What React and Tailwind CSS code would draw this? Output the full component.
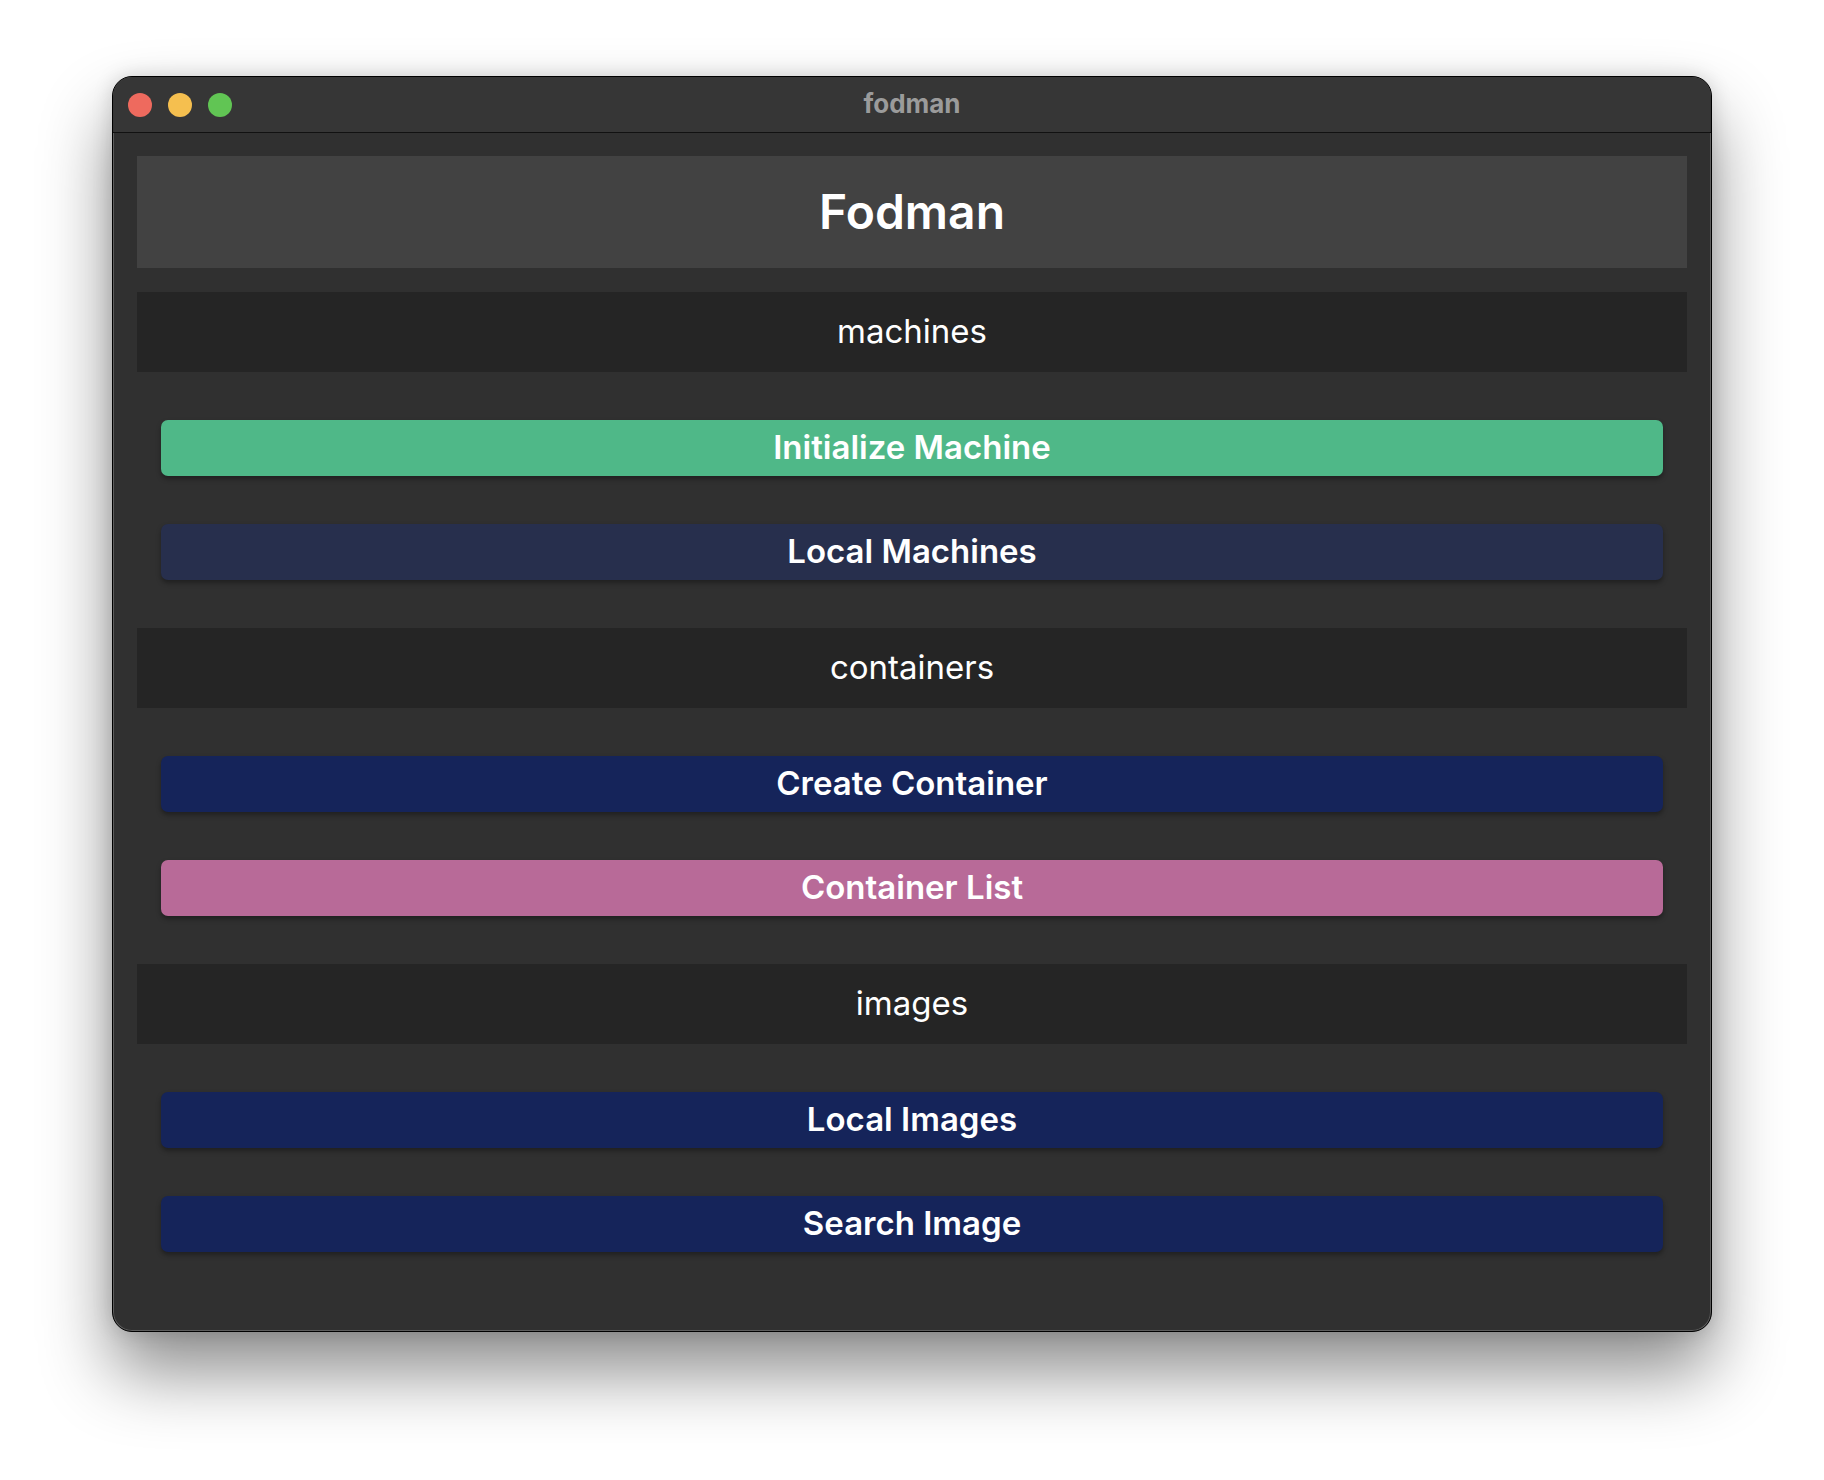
import React from "react";

const font = { fontFamily: "Inter, 'Noto Sans', 'Liberation Sans', sans-serif" };

function Btn({ label, color }) {
  return (
    <div
      className={`mx-6 h-[56px] rounded-[7px] flex items-center justify-center text-white text-[33px] font-semibold shadow-[0_3px_5px_rgba(0,0,0,0.35)] ${color}`}
    >
      {label}
    </div>
  );
}

function Section({ label }) {
  return (
    <div className="h-[80px] bg-[#252525] flex items-center justify-center text-white text-[33px] font-normal">
      {label}
    </div>
  );
}

export default function App() {
  return (
    <div className="min-h-[1480px] bg-white pt-[76px] px-[112px]" style={font}>
      <div className="w-[1600px] h-[1256px] rounded-[20px] border border-black bg-[#303030] overflow-hidden shadow-[0_40px_70px_rgba(0,0,0,0.45),0_0_20px_rgba(0,0,0,0.15),inset_0_0_0_1px_rgba(255,255,255,0.22)] flex flex-col">
        <div className="relative h-[56px] shrink-0 bg-[#363636] border-b border-[#111] flex items-center pl-[15px] gap-4">
          <div className="w-6 h-6 rounded-full bg-[#ee6a5e]" />
          <div className="w-6 h-6 rounded-full bg-[#f5bf4f]" />
          <div className="w-6 h-6 rounded-full bg-[#61c554]" />
          <div className="absolute inset-0 flex items-center justify-center pb-[3px] text-[26px] font-bold text-[#9b9b9b] pointer-events-none">
            fodman
          </div>
        </div>
        <div className="px-6 pt-[23px] flex flex-col">
          <div className="h-[112px] bg-[#424242] flex items-center justify-center text-white text-[48px] font-semibold mb-6">
            Fodman
          </div>
          <div className="flex flex-col gap-12">
            <Section label="machines" />
            <Btn label="Initialize Machine" color="bg-[#4fb888]" />
            <Btn label="Local Machines" color="bg-[#272f4d]" />
            <Section label="containers" />
            <Btn label="Create Container" color="bg-[#15245a]" />
            <Btn label="Container List" color="bg-[#b86a98]" />
            <Section label="images" />
            <Btn label="Local Images" color="bg-[#15245a]" />
            <Btn label="Search Image" color="bg-[#15245a]" />
          </div>
        </div>
      </div>
    </div>
  );
}
